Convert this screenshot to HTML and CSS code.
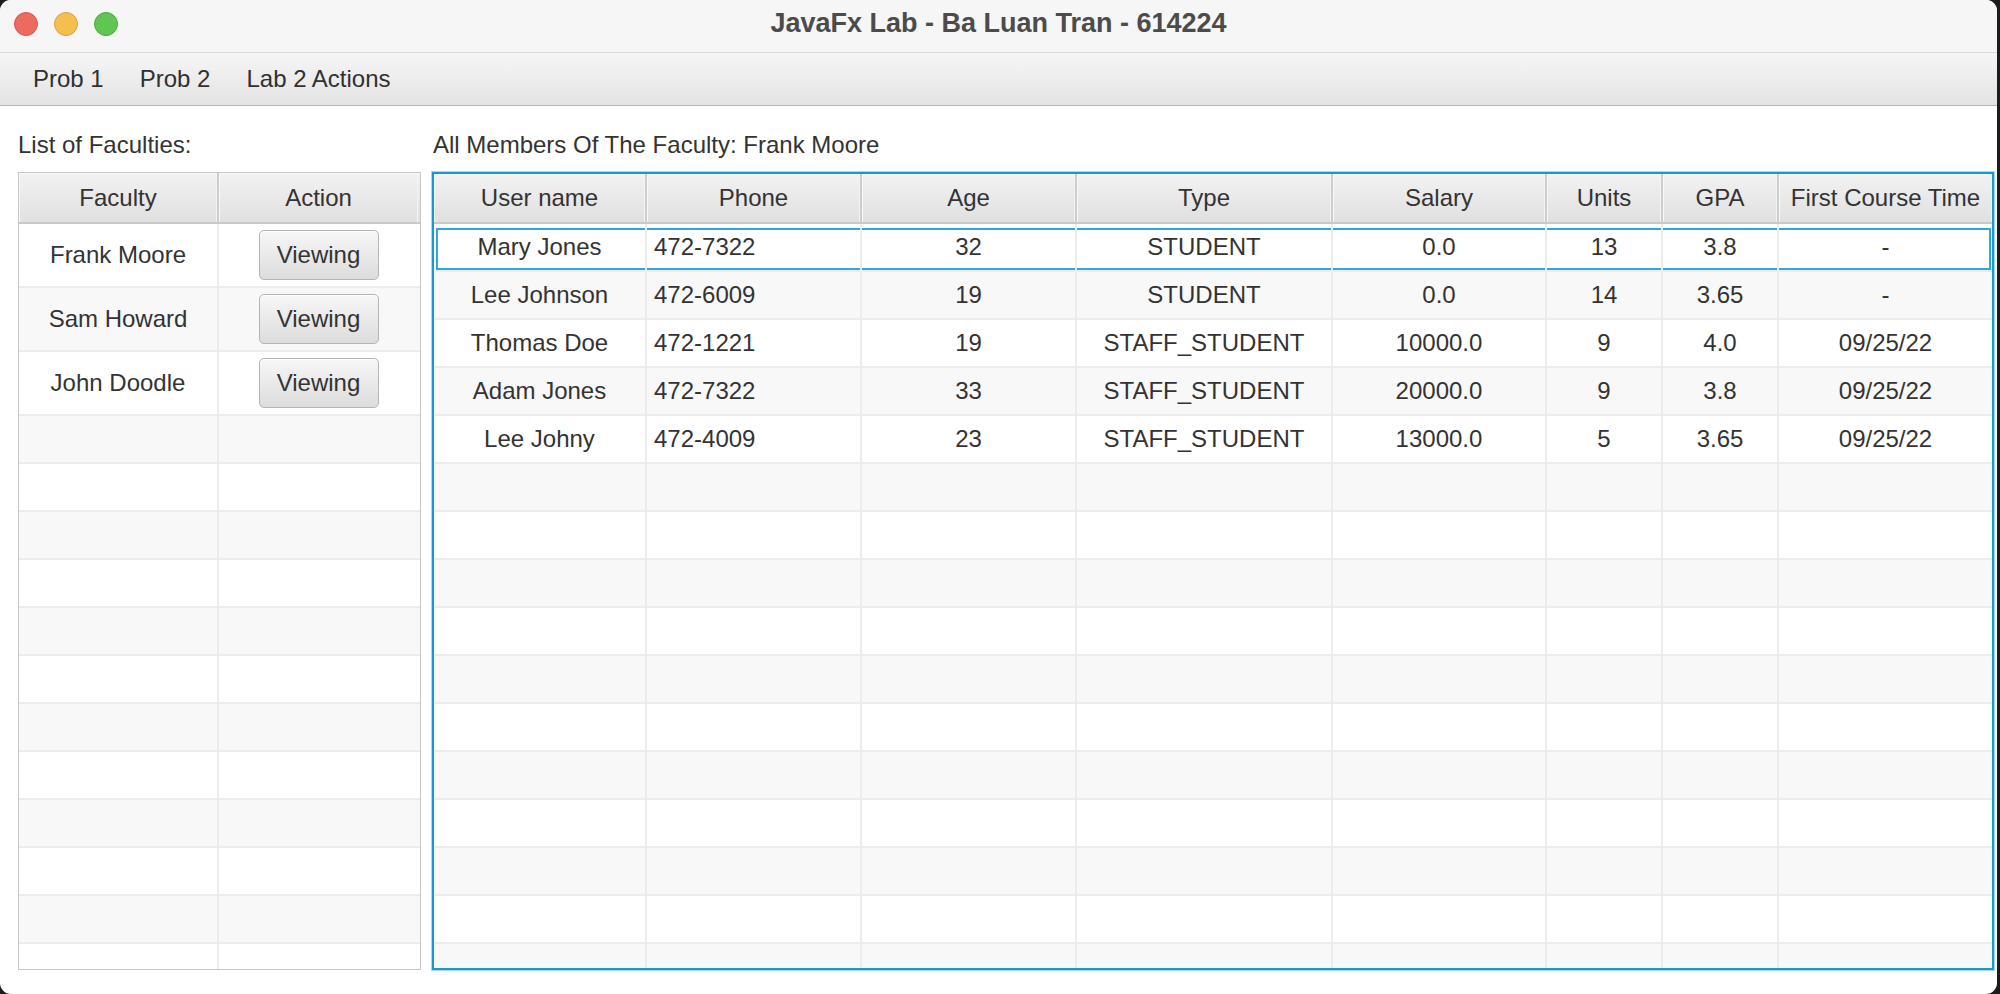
FILE: index.html
```html
<!DOCTYPE html>
<html lang="en">
<head>
<meta charset="utf-8">
<title>JavaFx Lab - Ba Luan Tran - 614224</title>
<link rel="stylesheet" href="styles.css">
</head>
<body>
<div class="window">
  <div class="titlebar">
    <div class="lights">
      <span class="light red"></span>
      <span class="light yellow"></span>
      <span class="light green"></span>
    </div>
    <div class="title">JavaFx Lab - Ba Luan Tran - 614224</div>
    <div></div>
  </div>
  <div class="menubar">
    <span class="menu-item">Prob 1</span>
    <span class="menu-item">Prob 2</span>
    <span class="menu-item">Lab 2 Actions</span>
  </div>
  <div class="content">
    <section class="panel panel-left">
      <div class="caption caption-left">List of Faculties:</div>
      <div class="table table-faculty">
        <div class="thead">
          <div class="th">Faculty</div>
          <div class="th">Action</div>
        </div>
        <div class="tbody">
          <div class="tr tall"><div class="td">Frank Moore</div><div class="td"><button class="btn">Viewing</button></div></div>
          <div class="tr tall"><div class="td">Sam Howard</div><div class="td"><button class="btn">Viewing</button></div></div>
          <div class="tr tall"><div class="td">John Doodle</div><div class="td"><button class="btn">Viewing</button></div></div>
          <div class="tr"><div class="td"></div><div class="td"></div></div>
          <div class="tr"><div class="td"></div><div class="td"></div></div>
          <div class="tr"><div class="td"></div><div class="td"></div></div>
          <div class="tr"><div class="td"></div><div class="td"></div></div>
          <div class="tr"><div class="td"></div><div class="td"></div></div>
          <div class="tr"><div class="td"></div><div class="td"></div></div>
          <div class="tr"><div class="td"></div><div class="td"></div></div>
          <div class="tr"><div class="td"></div><div class="td"></div></div>
          <div class="tr"><div class="td"></div><div class="td"></div></div>
          <div class="tr"><div class="td"></div><div class="td"></div></div>
          <div class="tr"><div class="td"></div><div class="td"></div></div>
          <div class="tr"><div class="td"></div><div class="td"></div></div>
        </div>
      </div>
    </section>
    <section class="panel panel-right">
      <div class="caption caption-right">All Members Of The Faculty: Frank Moore</div>
      <div class="table table-members">
        <div class="thead">
          <div class="th">User name</div>
          <div class="th">Phone</div>
          <div class="th">Age</div>
          <div class="th">Type</div>
          <div class="th">Salary</div>
          <div class="th">Units</div>
          <div class="th">GPA</div>
          <div class="th">First Course Time</div>
        </div>
        <div class="tbody">
          <div class="tr selected"><div class="td">Mary Jones</div><div class="td left">472-7322</div><div class="td">32</div><div class="td">STUDENT</div><div class="td">0.0</div><div class="td">13</div><div class="td">3.8</div><div class="td">-</div></div>
          <div class="tr"><div class="td">Lee Johnson</div><div class="td left">472-6009</div><div class="td">19</div><div class="td">STUDENT</div><div class="td">0.0</div><div class="td">14</div><div class="td">3.65</div><div class="td">-</div></div>
          <div class="tr"><div class="td">Thomas Doe</div><div class="td left">472-1221</div><div class="td">19</div><div class="td">STAFF_STUDENT</div><div class="td">10000.0</div><div class="td">9</div><div class="td">4.0</div><div class="td">09/25/22</div></div>
          <div class="tr"><div class="td">Adam Jones</div><div class="td left">472-7322</div><div class="td">33</div><div class="td">STAFF_STUDENT</div><div class="td">20000.0</div><div class="td">9</div><div class="td">3.8</div><div class="td">09/25/22</div></div>
          <div class="tr"><div class="td">Lee Johny</div><div class="td left">472-4009</div><div class="td">23</div><div class="td">STAFF_STUDENT</div><div class="td">13000.0</div><div class="td">5</div><div class="td">3.65</div><div class="td">09/25/22</div></div>
          <div class="tr"><div class="td"></div><div class="td"></div><div class="td"></div><div class="td"></div><div class="td"></div><div class="td"></div><div class="td"></div><div class="td"></div></div>
          <div class="tr"><div class="td"></div><div class="td"></div><div class="td"></div><div class="td"></div><div class="td"></div><div class="td"></div><div class="td"></div><div class="td"></div></div>
          <div class="tr"><div class="td"></div><div class="td"></div><div class="td"></div><div class="td"></div><div class="td"></div><div class="td"></div><div class="td"></div><div class="td"></div></div>
          <div class="tr"><div class="td"></div><div class="td"></div><div class="td"></div><div class="td"></div><div class="td"></div><div class="td"></div><div class="td"></div><div class="td"></div></div>
          <div class="tr"><div class="td"></div><div class="td"></div><div class="td"></div><div class="td"></div><div class="td"></div><div class="td"></div><div class="td"></div><div class="td"></div></div>
          <div class="tr"><div class="td"></div><div class="td"></div><div class="td"></div><div class="td"></div><div class="td"></div><div class="td"></div><div class="td"></div><div class="td"></div></div>
          <div class="tr"><div class="td"></div><div class="td"></div><div class="td"></div><div class="td"></div><div class="td"></div><div class="td"></div><div class="td"></div><div class="td"></div></div>
          <div class="tr"><div class="td"></div><div class="td"></div><div class="td"></div><div class="td"></div><div class="td"></div><div class="td"></div><div class="td"></div><div class="td"></div></div>
          <div class="tr"><div class="td"></div><div class="td"></div><div class="td"></div><div class="td"></div><div class="td"></div><div class="td"></div><div class="td"></div><div class="td"></div></div>
          <div class="tr"><div class="td"></div><div class="td"></div><div class="td"></div><div class="td"></div><div class="td"></div><div class="td"></div><div class="td"></div><div class="td"></div></div>
          <div class="tr"><div class="td"></div><div class="td"></div><div class="td"></div><div class="td"></div><div class="td"></div><div class="td"></div><div class="td"></div><div class="td"></div></div>
        </div>
      </div>
    </section>
  </div>
</div>
</body>
</html>
```

FILE: styles.css
```css
* { box-sizing: border-box; }

html, body {
  margin: 0;
  padding: 0;
}

body {
  width: 2000px;
  height: 994px;
  overflow: hidden;
  background: #1c1c1c;
  font-family: "Liberation Sans", Arial, sans-serif;
  color: #333333;
}

.window {
  width: 1997px;
  height: 994px;
  background: #ffffff;
  border-radius: 11px;
  overflow: hidden;
  display: flex;
  flex-direction: column;
}

/* ---------- title bar ---------- */
.titlebar {
  flex: none;
  height: 53px;
  padding-bottom: 5px;
  background: #f6f6f6;
  border-bottom: 1px solid #d9d9d9;
  display: grid;
  grid-template-columns: 1fr auto 1fr;
  align-items: center;
}

.lights {
  display: flex;
  gap: 16px;
  padding-left: 14px;
}

.light {
  width: 24px;
  height: 24px;
  border-radius: 50%;
  border: 1px solid transparent;
}

.light.red { background: #ed6a5e; border-color: #d55a4f; }
.light.yellow { background: #f5bf4f; border-color: #d9a340; }
.light.green { background: #61c554; border-color: #4eaa40; }

.title {
  font-size: 27px;
  font-weight: bold;
  color: #4b4b4b;
  white-space: nowrap;
}

/* ---------- menu bar ---------- */
.menubar {
  flex: none;
  height: 53px;
  display: flex;
  align-items: center;
  padding-left: 15px;
  background: linear-gradient(#f6f6f6, #e3e3e3);
  border-bottom: 1px solid #b6b6b6;
}

.menu-item {
  padding: 0 18px;
  font-size: 24px;
  color: #303030;
}

/* ---------- content ---------- */
.content {
  flex: 1;
  min-height: 0;
  display: flex;
  gap: 11px;
  padding: 25px 3px 24px 18px;
}

.panel {
  display: flex;
  flex-direction: column;
  min-height: 0;
}

.panel-left { width: 403px; }
.panel-right { width: 1562px; }

.caption {
  flex: none;
  height: 28px;
  line-height: 28px;
  font-size: 24px;
  color: #333333;
  margin-bottom: 13px;
  white-space: nowrap;
}

.caption-left { padding-left: 0; }
.caption-right { padding-left: 1px; }

.table {
  flex: 1;
  min-height: 0;
  overflow: hidden;
  display: flex;
  flex-direction: column;
  background: #ffffff;
}

.table-faculty {
  border: 1px solid #c6c6c6;
}

.table-members {
  border: 2px solid #1698d3;
  box-shadow: 0 0 0 1px #a9d8ef;
}

.table-faculty .thead,
.table-faculty .tr {
  grid-template-columns: 200px 199px;
}

.table-members .thead,
.table-members .tr {
  grid-template-columns: 213px 215px 215px 256px 214px 116px 116px 213px;
}

/* header */
.thead {
  flex: none;
  display: grid;
  height: 50px;
  background: linear-gradient(#f2f2f2, #e0e0e0);
  border-bottom: 2px solid #c9c9c9;
}

.table-faculty .thead { height: 51px; }

.th {
  display: flex;
  align-items: center;
  justify-content: center;
  font-size: 24px;
  color: #333333;
  white-space: nowrap;
  border-right: 2px solid #cdcdcd;
  box-shadow: inset 1px 1px 0 #f9f9f9, inset -1px 0 0 #f3f3f3;
}

.th:last-child { border-right: none; }

/* body */
.tbody {
  flex: 1;
  min-height: 0;
  overflow: hidden;
}

.tr {
  display: grid;
  height: 48px;
  background: #ffffff;
  border-bottom: 2px solid #ececec;
}

.tr:nth-child(even) { background: #f8f8f8; }

.tr.tall { height: 64px; }

.td {
  position: relative;
  z-index: 1;
  display: flex;
  align-items: center;
  justify-content: center;
  font-size: 24px;
  color: #333333;
  white-space: nowrap;
  border-right: 2px solid #ececec;
}

.td:last-child { border-right: none; }

.td.left {
  justify-content: flex-start;
  padding-left: 7px;
}

.tr.selected { position: relative; }

.tr.selected::before {
  content: "";
  position: absolute;
  top: 4px;
  left: 2px;
  right: 1px;
  bottom: 0;
  border: 2px solid #2ea8da;
  z-index: 0;
}

/* button */
.btn {
  width: 120px;
  height: 50px;
  padding: 0;
  font-family: inherit;
  font-size: 24px;
  color: #333333;
  background: linear-gradient(#f7f7f7, #dcdcdc);
  border: 1px solid #b4b4b4;
  border-radius: 5px;
  box-shadow: inset 0 1px 0 #ffffff;
}
```
